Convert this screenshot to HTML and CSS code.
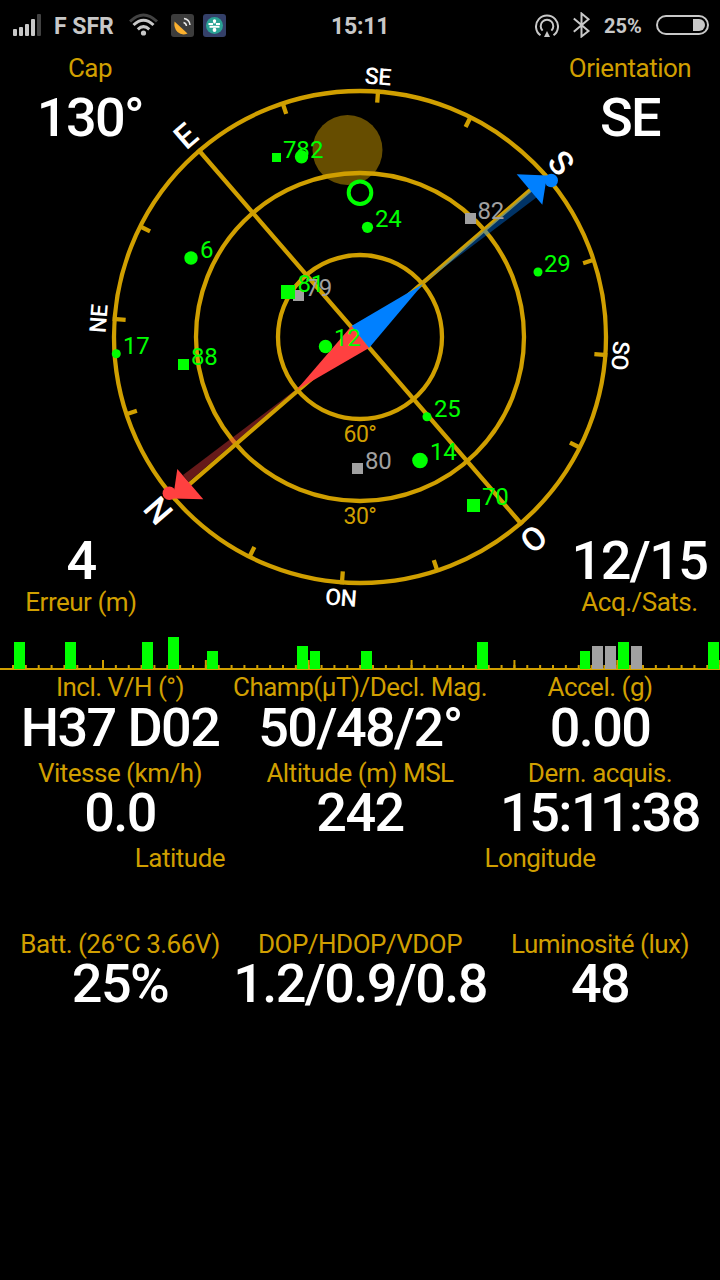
FILE: index.html
```html
<!DOCTYPE html>
<html lang="fr">
<head>
<meta charset="utf-8">
<title>GPS</title>
<link rel="stylesheet" href="styles.css">
</head>
<body>
<header class="status">
  <svg class="signal" width="28" height="24" viewBox="13 14 28 24">
    <g fill="#c8c8c8"><rect x="13" y="30" width="4" height="7" rx="1"/><rect x="19" y="28" width="4" height="9" rx="1"/><rect x="25" y="25" width="4" height="12" rx="1"/><rect x="31" y="20" width="4" height="17" rx="1"/></g>
    <rect x="37" y="15" width="4" height="22" rx="1" fill="#424242"/>
  </svg>
  <span class="carrier">F SFR</span>
  <svg class="wifi" width="30" height="26" viewBox="129 13 30 26" fill="none" stroke-width="3">
    <path d="M130 22.5Q143.500 9.500 157 22.500" stroke="#424242"/>
    <path d="M133.500 26Q143.500 16.500 153.500 26M137.800 30.300Q143.500 25 149.300 30.300" stroke="#c8c8c8"/>
    <circle cx="143.500" cy="34" r="2.600" fill="#c8c8c8"/>
  </svg>
  <svg class="app" width="23" height="23" viewBox="0 0 23 23">
    <rect width="23" height="23" rx="3" fill="#3c3c3c"/>
    <path d="M3.500 7.500L16.500 19.500Q11 22 6.500 18Q2.500 14 3.500 7.500Z" fill="#fbb02e"/>
    <path d="M12.500 8.500Q15 9 15.500 12M13 4.500Q18.500 5.500 19 11" fill="none" stroke="#e8e8e8" stroke-width="1.500"/>
  </svg>
  <svg class="app" width="23" height="23" viewBox="0 0 23 23">
    <rect width="23" height="23" rx="3" fill="#344069"/>
    <circle cx="11.500" cy="11.500" r="8.500" fill="#2aa295"/>
    <path d="M11.500 6V9.500M11.500 14V17M5.500 10H10M13 10H17M6.500 12.700H16.500" stroke="#fff" stroke-width="2"/>
    <circle cx="11.500" cy="7" r="1.700" fill="#fff"/><circle cx="11.500" cy="16" r="1.900" fill="#fff"/>
  </svg>
  <span class="clock">15:11</span>
  <svg class="cast" width="25" height="25" viewBox="534 12 25 25" fill="none" stroke="#c8c8c8" stroke-width="2">
    <path d="M540.500 34.300A11 11 0 1 1 553.500 34.300"/>
    <path d="M542.600 29.600A6.300 6.300 0 1 1 551.400 29.600"/>
    <path d="M547 30L550 36H544Z" fill="#c8c8c8" stroke="none"/>
  </svg>
  <svg class="bt" width="18" height="26" viewBox="573 12 18 26" fill="none" stroke="#c8c8c8" stroke-width="2">
    <path d="M573.800 18.500L588.500 31L581.500 36.500V13.500L588.500 19.300L573.800 31.800"/>
  </svg>
  <span class="percent">25%</span>
  <svg class="battery" width="54" height="21" viewBox="0 0 54 21">
    <rect x="1" y="1" width="51" height="18" rx="9" fill="none" stroke="#c8c8c8" stroke-width="2"/>
    <path d="M37 4H43A6 6 0 0 1 43 16H37Z" fill="#c8c8c8"/>
  </svg>
</header>

<main>
<section class="stage">
  <svg class="compass" width="720" height="575" viewBox="0 50 720 575">
    <circle cx="347.500" cy="150" r="35" fill="#664d00"/>
    <g fill="none" stroke="#d09f00" stroke-width="4.300">
      <circle cx="360" cy="337" r="246"/><circle cx="360" cy="337" r="164"/><circle cx="360" cy="337" r="82"/>
      <g transform="rotate(4.200 360 337)">
        <path d="M360 89V102M360 572V585M112 337H125M595 337H608"/>
        <path transform="rotate(22.500 360 337)" d="M360 90V102M360 572V584M113 337H125M595 337H607"/>
        <path transform="rotate(-22.500 360 337)" d="M360 90V102M360 572V584M113 337H125M595 337H607"/>
        <path transform="rotate(45 360 337)" d="M360 89V585M112 337H608"/>
      </g>
    </g>
    <g class="cardinal">
      <text transform="translate(360 337) rotate(-40.700)" x="-1" y="-254.500">E</text>
      <text transform="translate(360 337) rotate(49.300)" x="-1" y="-254.500">S</text>
      <text transform="translate(360 337) rotate(139.300)" x="0" y="-254.500">O</text>
      <text transform="translate(360 337) rotate(229.300)" x="0" y="-254.500">N</text>
    </g>
    <g class="intercardinal">
      <text transform="translate(360 337) rotate(4.300)" x="-1.800" y="-253">SE</text>
      <text transform="translate(360 337) rotate(94.300)" x="-1" y="-253">SO</text>
      <text transform="translate(360 337) rotate(184.300)" x="-1" y="-253">NO</text>
      <text transform="translate(360 337) rotate(-85.700)" x="-1.500" y="-254">NE</text>
    </g>
    <g class="elevation"><text x="360" y="442">60°</text><text x="360" y="524">30°</text></g>
    <g fill="#0080ff">
      <path d="M422 284L531 190L537 197Z" opacity=".4"/>
      <path d="M351.500 326L369 348L423 284Z"/>
      <path d="M516.700 174.300L547 175.500L542.300 204.700Z"/>
      <circle cx="551.300" cy="180.500" r="6.700"/>
    </g>
    <g fill="#ff4040">
      <path d="M298 388L183 475L188.500 482Z" opacity=".4"/>
      <path d="M351.500 326L369 348L296.500 390Z"/>
      <path d="M177.300 469L203.300 499.300L173 498.500Z"/>
      <circle cx="169.300" cy="493.300" r="6.700"/>
    </g>
    <g class="sat sat-off">
      <rect x="465" y="213" width="11" height="11"/><text x="477.500" y="218.700">82</text>
      <rect x="293" y="290" width="11" height="11"/><text x="305.500" y="295.700">79</text>
      <rect x="352" y="463" width="11" height="11"/><text x="365" y="468.700">80</text>
    </g>
    <g class="sat">
      <rect x="272" y="153" width="9" height="9"/><text x="283" y="157.500">78</text>
      <circle cx="301.500" cy="156.700" r="6.700"/><text x="310" y="157.500">2</text>
      <circle cx="360" cy="192.700" r="11.300" fill="none" stroke="#0f0" stroke-width="4"/>
      <circle cx="367.500" cy="227.300" r="5.600"/><text x="375" y="226.700">24</text>
      <circle cx="538" cy="272" r="4.500"/><text x="544" y="271.700">29</text>
      <circle cx="191" cy="258" r="6.700"/><text x="200" y="258">6</text>
      <circle cx="116.300" cy="353.700" r="4.500"/><text x="123" y="354">17</text>
      <rect x="178" y="359" width="11" height="11"/><text x="191" y="365">88</text>
      <rect x="281" y="285" width="14" height="14"/><text x="297.500" y="292">81</text>
      <circle cx="325.500" cy="346.500" r="6.700"/><text x="334" y="346">12</text>
      <circle cx="427" cy="416.700" r="4.500"/><text x="434" y="417">25</text>
      <circle cx="420" cy="460.500" r="7.800"/><text x="430" y="460">14</text>
      <rect x="467" y="499" width="13" height="13"/><text x="482" y="505">70</text>
    </g>
  </svg>
  <div class="corner heading"><span class="label">Cap</span><span class="value">130°</span></div>
  <div class="corner orient"><span class="label">Orientation</span><span class="value">SE</span></div>
  <div class="corner error"><span class="value">4</span><span class="label">Erreur (m)</span></div>
  <div class="corner sats"><span class="value">12/15</span><span class="label">Acq./Sats.</span></div>
</section>

<svg class="bars" width="720" height="47" viewBox="0 625 720 47">
  <g stroke="#d09f00" fill="none">
    <path d="M0 669H720" stroke-width="2"/>
    <path d="M12 666.500H720" stroke-width="3" stroke-dasharray="2 10.857"/>
    <path d="M102 664H720" stroke-width="8" stroke-dasharray="2 100.857"/>
  </g>
  <path fill="#0f0" d="M14 642h11v27h-11zM65 642h11v27h-11zM142 642h11v27h-11zM168 637h11v32h-11zM207 651h11v18h-11zM297 646h11v23h-11zM310 651h10v18h-10zM361 651h11v18h-11zM477 642h11v27h-11zM580 651h10v18h-10zM618 642h11v27h-11zM708 642h11v27h-11z"/>
  <path fill="#a0a0a0" d="M592 646h11v23h-11zM605 646h11v23h-11zM631 646h11v23h-11z"/>
</svg>

<section class="readings">
  <div class="row">
    <div class="cell"><span class="label">Incl. V/H (°)</span><span class="value">H37 D02</span></div>
    <div class="cell"><span class="label">Champ(µT)/Decl. Mag.</span><span class="value">50/48/2°</span></div>
    <div class="cell"><span class="label">Accel. (g)</span><span class="value">0.00</span></div>
  </div>
  <div class="row">
    <div class="cell"><span class="label">Vitesse (km/h)</span><span class="value">0.0</span></div>
    <div class="cell"><span class="label">Altitude (m) MSL</span><span class="value">242</span></div>
    <div class="cell"><span class="label">Dern. acquis.</span><span class="value">15:11:38</span></div>
  </div>
  <div class="row">
    <div class="cell"><span class="label">Latitude</span></div>
    <div class="cell"><span class="label">Longitude</span></div>
  </div>
  <div class="row">
    <div class="cell"><span class="label">Batt. (26°C 3.66V)</span><span class="value">25%</span></div>
    <div class="cell"><span class="label">DOP/HDOP/VDOP</span><span class="value">1.2/0.9/0.8</span></div>
    <div class="cell"><span class="label">Luminosité (lux)</span><span class="value">48</span></div>
  </div>
</section>
</main>
</body>
</html>
```
FILE: styles.css
```css
body {
  margin: 0;
  width: 720px;
  height: 1280px;
  overflow: hidden;
  background: #000;
  color: #fff;
  font-family: Roboto, "Liberation Sans", sans-serif;
}

svg { display: block; flex: none; }

.status {
  box-sizing: border-box;
  display: flex;
  align-items: center;
  height: 50px;
  padding-left: 13px;
  color: #c8c8c8;
  font-weight: 700;
  font-size: 23px;
  white-space: nowrap;
}
.carrier { width: 75px; margin-left: 13px; padding-top: 3px; }
.wifi { margin-right: 12px; }
.app { margin-right: 9px; }
.clock { width: 61px; margin-left: 96px; padding-top: 2px; letter-spacing: -0.200px; }
.cast { margin-left: 142px; }
.bt { margin-left: 14px; }
.percent { width: 40px; margin-left: 13px; padding-top: 2px; font-size: 20px; }
.battery { margin-left: 12px; }

.stage {
  display: grid;
  grid-template-columns: 180px 1fr 180px;
  grid-template-rows: 1fr 1fr;
  height: 575px;
}
.compass { grid-area: 1 / 1 / 3 / 4; }
.corner {
  display: flex;
  flex-direction: column;
  align-items: center;
}
.heading { grid-area: 1 / 1; padding-top: 3px; gap: 9px; }
.orient { grid-area: 1 / 3; padding-top: 3px; gap: 9px; }
.error { grid-area: 2 / 1; justify-content: flex-end; gap: 1px; padding: 0 18px 8px 0; }
.sats { grid-area: 2 / 3; justify-content: flex-end; gap: 1px; padding: 0 0 8px 19px; }

.label {
  color: #d09f00;
  font-size: 26px;
  line-height: 30px;
  letter-spacing: -0.500px;
  white-space: nowrap;
}
.value {
  font-size: 54px;
  line-height: 51px;
  font-weight: 500;
  letter-spacing: -1.600px;
  white-space: nowrap;
}

.cardinal, .intercardinal { fill: #fff; font-weight: 500; text-anchor: middle; }
.cardinal { font-size: 33px; }
.intercardinal { font-size: 23px; letter-spacing: -0.500px; }
.elevation { fill: #d09f00; font-size: 23px; letter-spacing: -0.500px; text-anchor: middle; }
.sat { fill: #0f0; font-size: 24px; letter-spacing: -0.300px; }
.sat-off { fill: #a0a0a0; }

.readings { display: flex; flex-direction: column; gap: 4.500px; }
.readings .label { margin-bottom: -0.100px; }
.row { display: flex; height: 81px; }
.cell {
  flex: 1 1 0;
  min-width: 0;
  display: flex;
  flex-direction: column;
  align-items: center;
}
```
